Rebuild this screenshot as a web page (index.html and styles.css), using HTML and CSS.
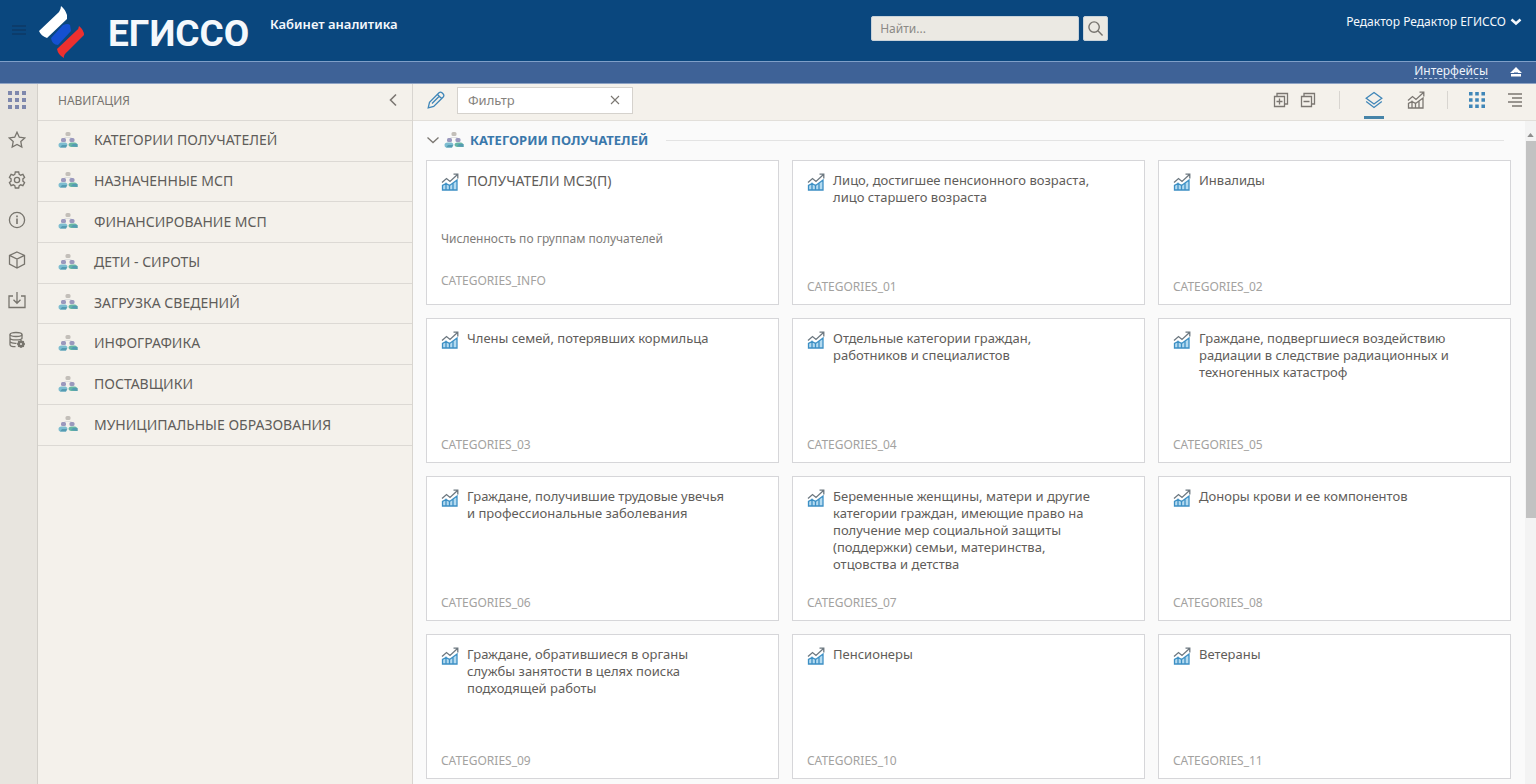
FILE: index.html
```html
<!DOCTYPE html>
<html lang="ru">
<head>
<meta charset="utf-8">
<title>ЕГИССО — Кабинет аналитика</title>
<link rel="stylesheet" href="styles.css">
</head>
<body>
<svg class="sprite" aria-hidden="true">
  <symbol id="grid" viewBox="0 0 18 18"><path fill="currentColor" stroke="none" d="M0 0h4v4H0zM7 0h4v4H7zM14 0h4v4h-4zM0 7h4v4H0zM7 7h4v4H7zM14 7h4v4h-4zM0 14h4v4H0zM7 14h4v4H7zM14 14h4v4h-4z"/></symbol>
  <symbol id="star" viewBox="0 0 18 18"><path d="M9 1.200l2.300 5 5.500.7-4 3.700 1 5.500L9 13.400l-4.800 2.700 1-5.500-4-3.700 5.500-.7z"/></symbol>
  <symbol id="gear" viewBox="0 0 18 18"><circle cx="9" cy="9" r="2.600"/><path d="M7.300 1h3.400l.5 2.300 1.500.9 2.200-.8 1.700 3-1.700 1.500v2.200l1.700 1.500-1.700 3-2.200-.8-1.500.9-.5 2.300H7.300l-.5-2.300-1.500-.9-2.200.8-1.700-3 1.700-1.500V7.900L1.400 6.400l1.700-3 2.200.8 1.500-.9z"/></symbol>
  <symbol id="info" viewBox="0 0 18 18"><circle cx="9" cy="9" r="7.600"/><path stroke-width="1.600" d="M9 7.500v5.500M9 4.600v1.600"/></symbol>
  <symbol id="cube" viewBox="0 0 18 18"><path d="M9 1l7.500 3.300v8.900L9 17l-7.500-3.800V4.300zM1.500 4.300L9 8l7.500-3.700M9 8v9"/></symbol>
  <symbol id="import" viewBox="0 0 18 18"><path d="M5 5H1v11.500h16V5h-4M9 1v11M5.500 8.800L9 12.300l3.500-3.500"/></symbol>
  <symbol id="base" viewBox="0 0 18 18"><ellipse cx="8" cy="3.500" rx="6" ry="2"/><path d="M2 3.500v10c0 1.200 2 2.200 5.500 2.200M14 3.500v4.200M2 7c0 2.600 12 2.600 12 0M2 10.300c0 1.500 3 2.200 6.500 2"/><circle cx="13" cy="13" r="2.500" stroke-width="2"/><path stroke-width="1.300" d="M13 9v8M9 13h8M10.200 10.200l5.600 5.600M15.800 10.200l-5.600 5.600"/><circle cx="13" cy="13" r="1" fill="#e8e6e0" stroke="none"/></symbol>
  <symbol id="people" viewBox="0 0 20 18"><rect x="7.500" y="1" width="5" height="4" rx="1.500" fill="#c3bfb9"/><rect x="3" y="7" width="5" height="4" rx="1.500" fill="#9a98bd"/><rect x="11.500" y="7" width="5" height="4" rx="1.500" fill="#9a98bd"/><path d="M7 6h6l1 1H6z" fill="#dfe0df"/><path d="M.5 14q0-2.500 3-2.500h4Q9.500 12 9.500 14l-1.500 2.500H2Q.5 16 .5 14z" fill="#7dbdd0"/><path d="M10.500 14q0-2.500 3-2.500h3q3 .5 3 2.500v2h-6.500q-2.500-.5-2.500-2z" fill="#66b5a5"/><path d="M2 16.500l2-2.500h5l-1 2.500zM13 15l2-2h4.500v3z" fill="#559bb2"/></symbol>
  <symbol id="chart" viewBox="0 0 18 18"><path class="bars" d="M1.500 17v-4.500L5 10.500V17zM5 17v-6.500l3.500 2V17zM8.500 17v-4.500L12 10V17zM12 17v-7l4-3v10z"/><path class="trend" d="M1 9.500l4.500-4 3.500 3L16.500 1.500M12.500 1.200h4.300v4.300"/></symbol>
  <symbol id="layers" viewBox="0 0 18 18"><path d="M9 1.500l7.800 5.800L9 13 1.200 7.300zM1.200 10.500L9 16.500l7.800-6"/></symbol>
  <symbol id="pencil" viewBox="0 0 18 18"><path d="M1.200 16.800l1.300-5.500L12 1.800q1.500-1.300 3 0l1.200 1.200q1.300 1.500 0 3L6.700 15.500zM10.500 3.500l4 4M5 12.500l7.500-7.500"/></symbol>
  <symbol id="plus" viewBox="0 0 16 16"><path d="M1.500 4.500h10v10h-10zM4 4V1.500h10.500V12H12M3.500 9.500h6M6.500 6.500v6"/></symbol>
  <symbol id="minus" viewBox="0 0 16 16"><path d="M1.500 4.500h10v10h-10zM4 4V1.500h10.500V12H12M3.500 9.500h6"/></symbol>
  <symbol id="left" viewBox="0 0 10 14"><path d="M8 1.500L2.500 7 8 12.500"/></symbol>
  <symbol id="down" viewBox="0 0 14 10"><path d="M1.500 2.500L7 7.500l5.500-5"/></symbol>
</svg>

<header class="header">
  <button class="burger" type="button" aria-label="Меню"><svg class="burger-icon" viewBox="0 0 14 10"><path d="M0 1h14M0 5h14M0 9h14"/></svg></button>
  <svg class="logo" viewBox="0 0 46 54" aria-hidden="true">
    <path fill="#fff" d="M22 1q4 3 6 9v4L8 33Q2 31 0 26L20 7q2-3 2-6z"/>
    <path fill="#1450d2" d="M12 33L24 20q5-2 7 0l1 6-13 14q-6 0-7-7z"/>
    <path fill="#ee302f" d="M18 44l19-18q3-2 3-5 5 4 5 9L29 46q-5 4-4 7-6-3-7-9z"/>
  </svg>
  <h1 class="brand">ЕГИССО</h1>
  <p class="cabinet">Кабинет аналитика</p>
  <form class="search">
    <input class="search-input" type="search" placeholder="Найти..." aria-label="Найти">
    <button class="search-button" type="button" aria-label="Искать"><svg class="line" viewBox="0 0 18 18"><circle cx="7.500" cy="7.500" r="5.500"/><path d="M11.500 11.500L16.500 16.500"/></svg></button>
  </form>
  <button class="user" type="button">Редактор Редактор ЕГИССО <svg class="user-arrow" viewBox="0 0 12 8" aria-hidden="true"><path d="M1.500 1.500L6 5.500l4.500-4"/></svg></button>
</header>
<div class="strip">
  <a class="interfaces" href="#">Интерфейсы</a>
  <button class="eject" type="button" aria-label="Свернуть шапку"><svg viewBox="0 0 12 10"><path d="M6 0l6 6H0zM1 7h10v2.500H1z"/><path class="eject-gap" d="M4 5.500h4v1H4z"/></svg></button>
</div>

<div class="layout">
  <nav class="rail" aria-label="Разделы">
    <button class="rail-button rail-active" type="button" aria-label="Навигация"><svg class="icon"><use href="#grid"/></svg></button>
    <button class="rail-button" type="button" aria-label="Избранное"><svg class="icon"><use href="#star"/></svg></button>
    <button class="rail-button" type="button" aria-label="Настройки"><svg class="icon"><use href="#gear"/></svg></button>
    <button class="rail-button" type="button" aria-label="Информация"><svg class="icon"><use href="#info"/></svg></button>
    <button class="rail-button" type="button" aria-label="Объекты"><svg class="icon"><use href="#cube"/></svg></button>
    <button class="rail-button" type="button" aria-label="Загрузка"><svg class="icon"><use href="#import"/></svg></button>
    <button class="rail-button" type="button" aria-label="База данных"><svg class="icon"><use href="#base"/></svg></button>
  </nav>

  <aside class="sidebar">
    <div class="sidebar-head">
      <h2 class="sidebar-title">НАВИГАЦИЯ</h2>
      <button class="plain" type="button" aria-label="Свернуть"><svg class="collapse"><use href="#left"/></svg></button>
    </div>
    <nav class="menu" aria-label="Навигация">
      <a class="menu-item" href="#"><svg class="people"><use href="#people"/></svg>КАТЕГОРИИ ПОЛУЧАТЕЛЕЙ</a>
      <a class="menu-item" href="#"><svg class="people"><use href="#people"/></svg>НАЗНАЧЕННЫЕ МСП</a>
      <a class="menu-item" href="#"><svg class="people"><use href="#people"/></svg>ФИНАНСИРОВАНИЕ МСП</a>
      <a class="menu-item" href="#"><svg class="people"><use href="#people"/></svg>ДЕТИ - СИРОТЫ</a>
      <a class="menu-item" href="#"><svg class="people"><use href="#people"/></svg>ЗАГРУЗКА СВЕДЕНИЙ</a>
      <a class="menu-item" href="#"><svg class="people"><use href="#people"/></svg>ИНФОГРАФИКА</a>
      <a class="menu-item" href="#"><svg class="people"><use href="#people"/></svg>ПОСТАВЩИКИ</a>
      <a class="menu-item" href="#"><svg class="people"><use href="#people"/></svg>МУНИЦИПАЛЬНЫЕ ОБРАЗОВАНИЯ</a>
    </nav>
  </aside>

  <main class="main">
    <div class="toolbar">
      <button class="plain blue" type="button" aria-label="Редактировать"><svg class="icon"><use href="#pencil"/></svg></button>
      <div class="filter">
        <input class="filter-input" type="text" placeholder="Фильтр" aria-label="Фильтр">
        <button class="plain" type="button" aria-label="Очистить"><svg class="cross" viewBox="0 0 10 10"><path d="M1 1l8 8M9 1L1 9"/></svg></button>
      </div>
      <div class="tools">
        <button class="plain" type="button" aria-label="Развернуть все"><svg class="fold"><use href="#plus"/></svg></button>
        <button class="plain" type="button" aria-label="Свернуть все"><svg class="fold"><use href="#minus"/></svg></button>
      </div>
      <div class="tools tools-view">
        <button class="plain blue tab" type="button" aria-label="Слои"><svg class="icon"><use href="#layers"/></svg></button>
        <button class="plain" type="button" aria-label="Графики"><svg class="icon"><use href="#chart"/></svg></button>
      </div>
      <div class="tools tools-mode">
        <button class="plain blue" type="button" aria-label="Плитка"><svg class="tile"><use href="#grid"/></svg></button>
        <button class="plain" type="button" aria-label="Список"><svg class="tile" viewBox="0 0 16 16"><path d="M1 2h14M5 6h10M1 10h14M5 14h10"/></svg></button>
      </div>
    </div>

    <div class="content">
      <section class="group">
        <div class="group-head">
          <button class="plain" type="button" aria-label="Свернуть группу"><svg class="expand"><use href="#down"/></svg></button>
          <svg class="people"><use href="#people"/></svg>
          <h2 class="group-title">КАТЕГОРИИ ПОЛУЧАТЕЛЕЙ</h2>
        </div>
        <div class="cards">
          <a class="card card-info" href="#"><svg class="icon card-icon"><use href="#chart"/></svg><h3 class="card-title">ПОЛУЧАТЕЛИ МСЗ(П)</h3><p class="card-note">Численность по группам получателей</p><p class="card-code">CATEGORIES_INFO</p></a>
          <a class="card" href="#"><svg class="icon card-icon"><use href="#chart"/></svg><h3 class="card-title">Лицо, достигшее пенсионного возраста,<br>лицо старшего возраста</h3><p class="card-code">CATEGORIES_01</p></a>
          <a class="card" href="#"><svg class="icon card-icon"><use href="#chart"/></svg><h3 class="card-title">Инвалиды</h3><p class="card-code">CATEGORIES_02</p></a>
          <a class="card" href="#"><svg class="icon card-icon"><use href="#chart"/></svg><h3 class="card-title">Члены семей, потерявших кормильца</h3><p class="card-code">CATEGORIES_03</p></a>
          <a class="card" href="#"><svg class="icon card-icon"><use href="#chart"/></svg><h3 class="card-title">Отдельные категории граждан,<br>работников и специалистов</h3><p class="card-code">CATEGORIES_04</p></a>
          <a class="card" href="#"><svg class="icon card-icon"><use href="#chart"/></svg><h3 class="card-title">Граждане, подвергшиеся воздействию<br>радиации в следствие радиационных и<br>техногенных катастроф</h3><p class="card-code">CATEGORIES_05</p></a>
          <a class="card" href="#"><svg class="icon card-icon"><use href="#chart"/></svg><h3 class="card-title">Граждане, получившие трудовые увечья<br>и профессиональные заболевания</h3><p class="card-code">CATEGORIES_06</p></a>
          <a class="card" href="#"><svg class="icon card-icon"><use href="#chart"/></svg><h3 class="card-title">Беременные женщины, матери и другие<br>категории граждан, имеющие право на<br>получение мер социальной защиты<br>(поддержки) семьи, материнства,<br>отцовства и детства</h3><p class="card-code">CATEGORIES_07</p></a>
          <a class="card" href="#"><svg class="icon card-icon"><use href="#chart"/></svg><h3 class="card-title">Доноры крови и ее компонентов</h3><p class="card-code">CATEGORIES_08</p></a>
          <a class="card" href="#"><svg class="icon card-icon"><use href="#chart"/></svg><h3 class="card-title">Граждане, обратившиеся в органы<br>службы занятости в целях поиска<br>подходящей работы</h3><p class="card-code">CATEGORIES_09</p></a>
          <a class="card" href="#"><svg class="icon card-icon"><use href="#chart"/></svg><h3 class="card-title">Пенсионеры</h3><p class="card-code">CATEGORIES_10</p></a>
          <a class="card" href="#"><svg class="icon card-icon"><use href="#chart"/></svg><h3 class="card-title">Ветераны</h3><p class="card-code">CATEGORIES_11</p></a>
        </div>
      </section>
      <div class="scrollbar" aria-hidden="true">
        <svg class="scroll-up" viewBox="0 0 8 5"><path d="M4 0l4 5H0z"/></svg>
        <div class="scroll-thumb"></div>
      </div>
    </div>
  </main>
</div>
</body>
</html>
```

FILE: styles.css
```css
* { box-sizing: border-box; }

body {
  margin: 0;
  height: 100vh;
  display: flex;
  flex-direction: column;
  overflow: hidden;
  background: #fafafa;
  color: #5f5d5a;
  font: 13px/17px "Noto Sans", "Open Sans", sans-serif;
}

h1, h2, h3, p { margin: 0; font-weight: 400; }
a { color: inherit; text-decoration: none; }
button, input { font: inherit; color: inherit; }
svg { flex: none; fill: none; stroke: currentColor; stroke-width: 1.3; display: block; }

.sprite { position: absolute; width: 0; height: 0; }
.icon { width: 18px; height: 18px; }

.header {
  flex: none;
  display: flex;
  align-items: flex-start;
  height: 62px;
  padding: 0 14px 0 12px;
  border-bottom: 1px solid #7f9fc8;
  background: #0a477e;
  color: #f4f8fc;
}
.burger { margin: 25px 13px 0 0; padding: 0; border: 0; background: none; color: #0c3c6b; }
.burger-icon { width: 14px; height: 10px; stroke-width: 2; }
.logo { width: 46px; height: 54px; margin-top: 5px; stroke: none; }
.brand {
  margin: 12px 0 0 23px;
  width: 162px;
  font: 700 37px/44px Roboto, sans-serif;
}
.cabinet { margin-top: 16px; font-weight: 600; }
.search { display: flex; gap: 4px; margin: 16px 0 0 auto; }
.search-input {
  width: 208px;
  height: 25px;
  padding: 0 8px;
  border: 1px solid #c9d3da;
  border-radius: 2px;
  background: #ebe9e3;
  font-size: 12px;
}
.search-input::placeholder { color: #8b8a86; opacity: 1; }
.search-button {
  display: grid;
  place-items: center;
  width: 25px;
  height: 25px;
  padding: 0;
  border: 1px solid #c9d3da;
  border-radius: 2px;
  background: #ebe9e3;
  color: #77746f;
}
.line { width: 17px; height: 17px; stroke-width: 1.5; }
.user {
  display: flex;
  align-items: center;
  gap: 4px;
  margin: 13px 0 0 238px;
  padding: 0;
  border: 0;
  background: none;
  font-size: 12px;
}
.user-arrow { width: 12px; height: 8px; stroke-width: 2.5; }

.strip {
  flex: none;
  display: flex;
  align-items: center;
  justify-content: flex-end;
  gap: 22px;
  height: 22px;
  padding: 0 14px 4px 0;
  border-bottom: 1px solid #8ea3c4;
  background: #3e6297;
  color: #eef3fa;
}
.interfaces { border-bottom: 1px dashed #b6c6de; font-size: 12px; line-height: 15px; }
.eject { padding: 3px 0 0; border: 0; background: none; color: #fff; }
.eject svg { width: 12px; height: 10px; fill: currentColor; stroke: none; }
.eject-gap { fill: #3e6297; }

.layout { flex: 1; min-height: 0; display: flex; }

.rail {
  flex: none;
  width: 38px;
  padding-right: 4px;
  border-right: 1px solid #d3d0ca;
  background: #e8e5df;
}
.rail-button {
  display: grid;
  place-items: center;
  width: 100%;
  height: 40px;
  padding: 0 0 8px;
  border: 0;
  background: none;
  color: #77746d;
}
.rail-active { color: #7e88ad; }

.sidebar {
  flex: none;
  width: 375px;
  border-right: 1px solid #d8d5d0;
  background: #f4f1eb;
}
.sidebar-head {
  display: flex;
  align-items: center;
  justify-content: space-between;
  height: 37px;
  padding: 0 14px 4px 20px;
  border-bottom: 1px solid #dcd9d4;
}
.sidebar-title { color: #787570; font-size: 12px; }
.plain {
  display: grid;
  place-items: center;
  padding: 0;
  border: 0;
  background: none;
  color: #7b7772;
}
.blue { color: #3f86b8; }
.collapse { width: 10px; height: 14px; stroke-width: 1.6; }

.menu { display: grid; grid-auto-rows: 1fr; height: 325px; }
.menu-item {
  display: flex;
  align-items: center;
  gap: 16px;
  padding: 0 0 2px 20px;
  border-bottom: 1px solid #dcd9d4;
  font-size: 14px;
}
.people { width: 20px; height: 18px; stroke: none; }

.main { flex: 1; min-width: 0; display: flex; flex-direction: column; }
.toolbar {
  flex: none;
  display: flex;
  align-items: center;
  height: 37px;
  padding: 0 13px 4px 14px;
  border-bottom: 1px solid #e2dfda;
  background: #f4f1eb;
}
.filter {
  display: flex;
  align-items: center;
  width: 176px;
  height: 27px;
  margin: 0 auto 0 12px;
  padding: 0 12px 0 10px;
  border: 1px solid #d5d2cd;
  background: #fff;
}
.filter-input { flex: 1; min-width: 0; padding: 0; border: 0; outline: 0; background: none; }
.filter-input::placeholder { color: #85827d; opacity: 1; }
.cross { width: 10px; height: 10px; stroke-width: 1.1; }
.tools { display: flex; align-items: center; gap: 11px; }
.tools-view, .tools-mode { height: 18px; border-left: 1px solid #d8d5d0; }
.tools-view { gap: 24px; margin-left: 23px; padding-left: 25px; }
.tools-mode { gap: 22px; margin-left: 22px; padding-left: 21px; }
.fold { width: 16px; height: 16px; }
.tile { width: 16px; height: 16px; }
.tab { position: relative; }
.tab::after {
  content: "";
  position: absolute;
  left: -1px;
  right: -1px;
  bottom: -10px;
  height: 3px;
  background: #4684a8;
}

.content { flex: 1; min-height: 0; display: flex; }
.group { flex: 1; min-width: 0; padding: 0 14px 0 13px; }
.group-head { display: flex; align-items: center; height: 39px; padding-bottom: 1px; gap: 4px; }
.group-head::after {
  content: "";
  flex: 1;
  margin: 0 7px 0 14px;
  border-top: 1px solid #e3e3e3;
}
.expand { width: 14px; height: 10px; }
.group-title { margin-left: 2px; color: #3a78ab; font-size: 13px; font-weight: 700; }

.cards { display: grid; grid-template-columns: repeat(3, 1fr); gap: 13px; }
.card {
  display: grid;
  grid-template-columns: 18px 1fr;
  grid-template-rows: auto 1fr auto;
  column-gap: 8px;
  height: 145px;
  padding: 11px 13px 9px 14px;
  border: 1px solid #d6d6d9;
  background: #fff;
}
.card-icon {
  --bars: #3c8fc4;
  --fill: #b3daf0;
  margin-top: 1px;
  color: #6d7880;
}
.bars { stroke: var(--bars, currentColor); fill: var(--fill, none); }
.card-title { font-size: 13px; }
.card-note { grid-column: 1 / -1; align-self: center; padding-top: 14px; color: #7e7c79; font-size: 12px; }
.card-code { grid-column: 1 / -1; grid-row: 3; color: #a3a2a0; font-size: 12px; }
.card-info { padding-bottom: 15px; }
.card-info .card-title { font-size: 14px; }

.scrollbar { flex: none; width: 11px; padding-top: 12px; background: #f3f3f3; }
.scroll-up { width: 7px; height: 4px; margin: 0 auto 4px; fill: #8d8d8d; stroke: none; }
.scroll-thumb { height: 377px; margin-left: 1px; background: #c2c2c2; }
```
